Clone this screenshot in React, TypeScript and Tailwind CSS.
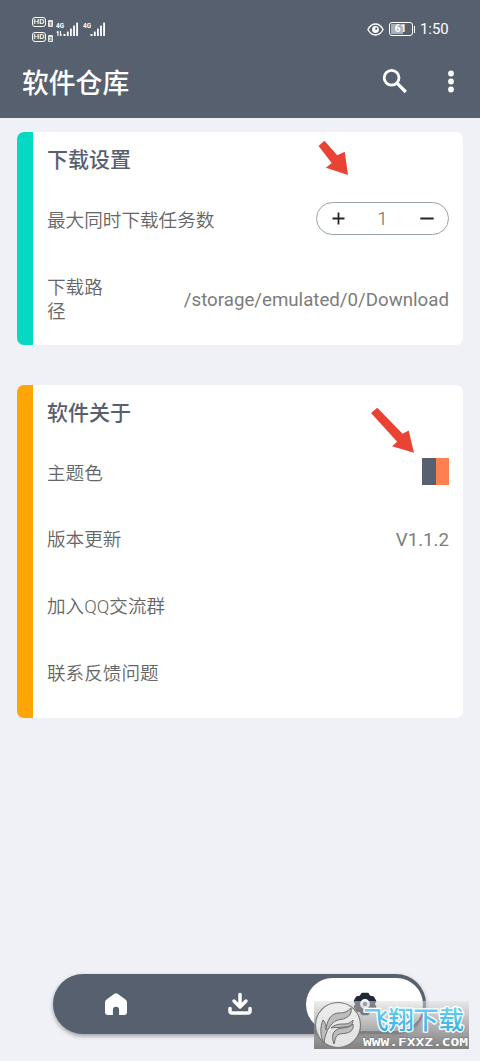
import type { ReactNode } from "react";

const font = "font-['Roboto','Noto_Sans_CJK_SC',sans-serif]";

function HdBadge({ sim }: { sim: string }) {
  return (
    <div className="flex h-[11px] items-end gap-[2px]">
      <span className="flex h-[10px] w-[14px] items-center justify-center rounded-[3px] border border-white text-[8px] leading-none font-medium text-white">
        HD
      </span>
      <span className="flex h-[7px] w-[5px] items-center justify-center rounded-[1px] bg-white/85 text-[6px] leading-none font-bold text-[#57606f]">
        {sim}
      </span>
    </div>
  );
}

function Signal({ data }: { data?: boolean }) {
  return (
    <div className="relative h-[16px] w-[23px]">
      <span className="absolute top-0 left-0 origin-left scale-x-80 text-[8px] leading-[7px] font-bold text-white">4G</span>
      <svg className="absolute inset-0" width="23" height="16" viewBox="0 0 23 16" fill="#fff">
        {data && <path d="M2 9.500v4.500M0.800 10.600L2 9.200M4.400 9v4.300M4.400 13.800l1.200-1.500" stroke="#fff" strokeWidth="1.100" fill="none" />}
        <rect x="7.500" y="12" width="2" height="2" />
        <rect x="10.900" y="9.600" width="1.800" height="4.400" />
        <rect x="14" y="6.600" width="1.800" height="7.400" />
        <rect x="17.100" y="3.600" width="1.800" height="10.400" />
        <rect x="20.200" y="0.600" width="1.800" height="13.400" />
      </svg>
    </div>
  );
}

function StatusBar() {
  return (
    <div className="flex h-[46px] items-start justify-between pr-[31px] pl-[32px]">
      <div className="flex">
        <div className="flex flex-col gap-[4px] pt-[16px]">
          <HdBadge sim="1" />
          <HdBadge sim="2" />
        </div>
        <div className="flex gap-[4px] pt-[22px] pl-[3px]">
          <Signal data />
          <Signal />
        </div>
      </div>
      <div className="flex h-[30px] items-center pt-[28px]">
        <svg width="17" height="13" viewBox="0 0 17 13" fill="none">
          <path d="M0.900 6.500C2.800 2.900 5.500 1 8.500 1s5.700 1.900 7.600 5.500C14.200 10.100 11.500 12 8.500 12S2.800 10.100 0.900 6.500Z" stroke="#fff" strokeWidth="1.300" />
          <circle cx="8.500" cy="6.500" r="3.400" fill="#fff" />
          <circle cx="9.300" cy="5.700" r="1.100" fill="#57606f" />
        </svg>
        <div className="ml-[5px] flex h-[14px] w-[24px] rounded-[3px] border border-white p-px">
          <span className="flex w-full items-center justify-center rounded-[1px] bg-linear-to-r from-white/50 from-60% to-transparent to-60% text-[10px] leading-none font-bold text-white">
            61
          </span>
        </div>
        <div className="ml-[1px] h-[7px] w-[1.5px] bg-white" />
        <span className="ml-[5px] w-[29px] pt-px text-[14.9px] leading-none font-normal whitespace-nowrap text-white">1:50</span>
      </div>
    </div>
  );
}

function Header() {
  return (
    <header className="h-[118px] bg-[#57606f]">
      <StatusBar />
      <div className="flex h-[72px] items-center pl-[22px]">
        <h1 className="flex-1 pt-[3px] text-[26.8px] leading-[40px] font-medium text-white">软件仓库</h1>
        <svg className="mr-[39px]" width="26" height="26" viewBox="0 0 26 26" fill="none" stroke="#fff">
          <circle cx="9.600" cy="8.800" r="7.400" strokeWidth="2.800" />
          <path d="M15 14.200l8.800 8.800" strokeWidth="3.200" />
        </svg>
        <svg className="mr-[25.5px]" width="8" height="24" viewBox="0 0 8 24" fill="#fff">
          <circle cx="4" cy="3.500" r="2.900" />
          <circle cx="4" cy="11.500" r="2.900" />
          <circle cx="4" cy="19.500" r="2.900" />
        </svg>
      </div>
    </header>
  );
}

function Row({ label, children }: { label: string; children?: ReactNode }) {
  return (
    <div className="flex h-[66.7px] items-center justify-between">
      <span className="pt-[4px]">{label}</span>
      {children}
    </div>
  );
}

function Stepper() {
  return (
    <div className="flex h-[33px] w-[133px] items-center justify-between rounded-full border border-[#95a3ac] pr-[14px] pl-[15px]">
      <svg width="13" height="13" viewBox="0 0 13 13" stroke="#24262b" strokeWidth="1.8">
        <path d="M6.5 0.5v12M0.5 6.5h12" />
      </svg>
      <span className="pt-px leading-none">1</span>
      <svg width="14" height="13" viewBox="0 0 14 13" stroke="#24262b" strokeWidth="1.8">
        <path d="M0.3 6.5h13.4" />
      </svg>
    </div>
  );
}

function Watermark() {
  return (
    <div className="absolute top-[1001px] left-[314px] flex h-[48px] w-[155px] bg-linear-to-b from-[#dedede]/50 to-[#747474]/90">
      <svg className="shrink-0" width="48" height="48" viewBox="0 0 48 48">
        <circle cx="24" cy="24" r="22.5" fill="#ececec" fillOpacity=".9" stroke="#777" strokeWidth="1.1" />
        <g fill="#bdbdbd" stroke="#6c6c6c" strokeWidth="1" strokeLinejoin="round">
          <path d="M10 42C6 35 6 26 9 19c3 3 3 6 3 10 1-10 5-17 13-17 5 0 8-1 12-5 1 6-2 9-8 11-6 1-9 2-12 6-4 5-6 10-7 18Z" />
          <path d="M20 43c-3-8-1-13 4-15 6-2 10 0 15-5 1 5-2 8-6 9-5 1-9 0-11 4-1 2-1 4-2 7Z" />
          <path d="M17 27c4-4 9-4 14-4 4 0 6-2 8-4 0 5-4 7-9 7-5 1-10 0-13 1Z" />
        </g>
      </svg>
      <div className="flex flex-col pl-px">
        <svg className="-mt-[2px] shrink-0" width="106" height="42" viewBox="0 0 106 42">
          <defs>
            <linearGradient id="cyan" x1="0" y1="0" x2="0" y2="1">
              <stop offset="0" stopColor="#7bdcf5" />
              <stop offset="1" stopColor="#29a8e3" />
            </linearGradient>
          </defs>
          <text x="0" y="30" textLength="101" fill="url(#cyan)" stroke="#fff" strokeWidth="2.6" strokeLinejoin="round" paintOrder="stroke" fontSize="25.5" fontWeight="500" fontFamily="Noto Sans CJK SC, sans-serif">
            飞翔下载
          </text>
        </svg>
        <svg className="-mt-[7px] shrink-0" width="106" height="15" viewBox="0 0 106 15">
          <text x="0" y="11.5" textLength="105" lengthAdjust="spacingAndGlyphs" fill="#fff" stroke="#777" strokeWidth="0.8" paintOrder="stroke" fontSize="11" fontWeight="700" fontFamily="DejaVu Sans Mono, monospace">
            WWW.FXXZ.COM
          </text>
        </svg>
      </div>
    </div>
  );
}

function BottomNav() {
  return (
    <nav className="mt-auto mb-[27px] ml-[53px] flex h-[60px] w-[373px] items-center rounded-full bg-[#57606f] shadow-[0_2px_4px_rgba(0,0,0,0.35)]">
      <div className="flex w-[125px] justify-center">
        <svg width="22" height="22" viewBox="0 0 22 22" fill="#fff">
          <path d="M9.4 0.8a2.7 2.7 0 0 1 3.2 0l7.8 5.7q1.6 1.2 1.6 3V19a3 3 0 0 1-3 3h-4.9v-5.1a3.1 3.1 0 0 0-6.2 0V22H3a3 3 0 0 1-3-3V9.5q0-1.8 1.6-3Z" />
        </svg>
      </div>
      <div className="flex w-[124px] justify-center">
        <svg width="24" height="24" viewBox="0 0 24 24" fill="none" stroke="#fff" strokeWidth="3.5" strokeLinecap="round" strokeLinejoin="round">
          <path d="M12 2.500V14M6 9l6 6 6-6M2 16.500V19q0 2 2 2h16q2 0 2-2v-2.500" />
        </svg>
      </div>
      <div className="ml-[4px] flex h-[53px] w-[117px] items-center justify-center rounded-full bg-white">
        <svg width="24" height="24" viewBox="0 0 24 24" fill="#202938">
          <path
            d="M9.500 0.800h5q1.200 0 1.700 1.300c.5 1.600 1.300 2.100 2.700 1.900q1.500-.1 2.200 1l2 3.400q.7 1.200-.3 2.100c-1.100 1-1.100 2 0 3q1 .9.3 2.100l-2 3.400q-.7 1.100-2.200 1c-1.400-.2-2.200.300-2.700 1.900q-.5 1.300-1.700 1.300h-5q-1.200 0-1.700-1.300c-.5-1.600-1.300-2.100-2.700-1.900q-1.500.1-2.200-1l-2-3.400q-.7-1.200.3-2.100c1.100-1 1.100-2 0-3q-1-.9-.3-2.100l2-3.400q.7-1.100 2.200-1c1.400.2 2.200-.300 2.700-1.900q.5-1.300 1.700-1.300Z"
          />
          <circle cx="12" cy="12" r="3.6" fill="#5f6672" stroke="#fff" strokeWidth="2.6" />
        </svg>
      </div>
    </nav>
  );
}

export default function App() {
  return (
    <div className={`relative flex h-[1061px] w-[480px] flex-col overflow-hidden bg-[#f0f1f6] ${font}`}>
      <Header />
      <main className="flex flex-col gap-[40px] pt-[14px] pr-[17px] pl-[17px] text-[18.6px] leading-[24.5px] font-[350] text-[#666666]">
        <section className="h-[213px] overflow-hidden rounded-[7px] border-l-[16px] border-[#05d9c4] bg-white pr-[14px] pl-[14px]">
          <h2 className="h-[53.5px] text-[21px] leading-[57px] font-medium text-[#57606f]">下载设置</h2>
          <Row label="最大同时下载任务数">
            <Stepper />
          </Row>
          <div className="flex h-[93px] items-center justify-between pt-[3px]">
            <span className="w-[66px]">下载路径</span>
            <span className="text-[18.7px] font-normal text-[#7c7c7c]">/storage/emulated/0/Download</span>
          </div>
        </section>
        <section className="h-[333px] overflow-hidden rounded-[7px] border-l-[16px] border-[#fda504] bg-white pr-[14px] pl-[14px]">
          <h2 className="h-[53.5px] text-[21px] leading-[57px] font-medium text-[#57606f]">软件关于</h2>
          <Row label="主题色">
            <div className="flex h-[27px] w-[27px]">
              <div className="w-1/2 bg-[#57606f]" />
              <div className="w-1/2 bg-[#ff7f50]" />
            </div>
          </Row>
          <Row label="版本更新">
            <span className="pt-[3px] text-[18.7px] font-normal text-[#7c7c7c]">V1.1.2</span>
          </Row>
          <Row label="加入QQ交流群" />
          <Row label="联系反馈问题" />
        </section>
      </main>
      <BottomNav />
      <svg className="absolute top-[140px] left-[317px]" width="33" height="37" viewBox="0 0 33 37" fill="#e94433">
        <path d="M7.400 0.700L20.200 15.200L27.700 11.800L31 35L8.900 27.700L14.700 23.100L1.600 5.900Z" />
      </svg>
      <svg className="absolute top-[406px] left-[370px]" width="46" height="49" viewBox="0 0 46 49" fill="#e94433">
        <path d="M7.300 1.700L32.600 27.700L38.700 24.400L44 46.700L22 40.300L27.200 35.700L1 6.900Z" />
      </svg>
      <Watermark />
    </div>
  );
}
